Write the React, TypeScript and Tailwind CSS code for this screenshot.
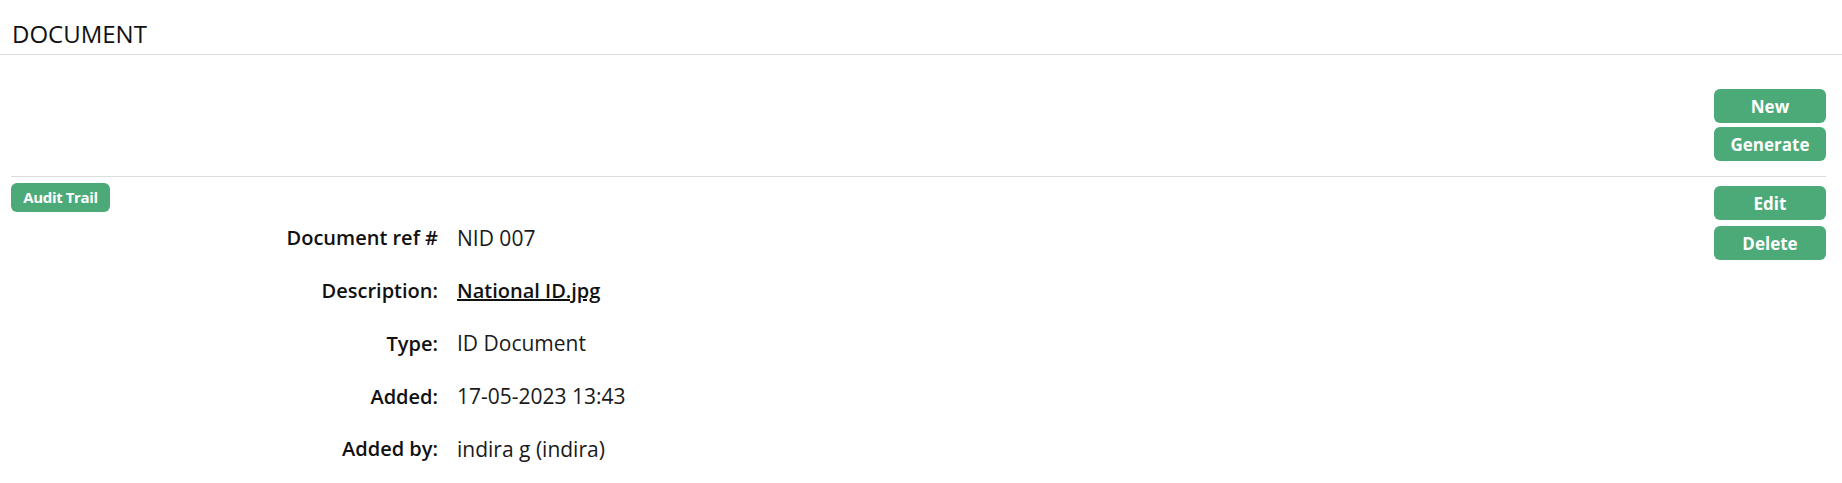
import React from "react";

const details: { label: string; value: string; link?: boolean }[] = [
  { label: "Document ref #", value: "NID 007" },
  { label: "Description:", value: "National ID.jpg", link: true },
  { label: "Type:", value: "ID Document" },
  { label: "Added:", value: "17-05-2023 13:43" },
  { label: "Added by:", value: "indira g (indira)" },
];

function GreenButton({ children }: { children: React.ReactNode }) {
  return (
    <button className="w-[112px] h-[34px] rounded-[6px] bg-[#4caa79] text-white text-[17px] font-bold leading-none">
      {children}
    </button>
  );
}

export default function App() {
  return (
    <div className="min-h-[483px] bg-white text-[#111] font-['Open_Sans',sans-serif]">
      {/* page title */}
      <div className="h-[55px] px-3 pt-[19px] border-b border-[#dddddd]">
        <h1 className="text-[24px] leading-[30px] font-normal">DOCUMENT</h1>
      </div>

      <div className="pl-[11px] pr-4">
        {/* toolbar */}
        <div className="flex flex-col items-end gap-1 pt-[34px] pb-[15px] border-b border-[#dddddd]">
          <GreenButton>New</GreenButton>
          <GreenButton>Generate</GreenButton>
        </div>

        <div className="flex">
          <div className="flex-1">
            <button className="mt-[6px] h-[29px] w-[99px] rounded-[6px] bg-[#4caa79] text-white text-[15px] font-bold tracking-tight leading-none">
              Audit Trail
            </button>
            <div className="grid grid-cols-[427px_1fr] gap-x-[19px]">
              {details.map((d) => (
                <React.Fragment key={d.label}>
                  <div className="h-[52.75px] flex items-center justify-end text-[20px] font-semibold">
                    {d.label}
                  </div>
                  <div className="h-[52.75px] flex items-center text-[21px] text-[#1a1a1a]">
                    {d.link ? (
                      <a href="#" className="underline font-semibold text-[20px] text-[#111]">
                        {d.value}
                      </a>
                    ) : (
                      d.value
                    )}
                  </div>
                </React.Fragment>
              ))}
            </div>
          </div>
          <div className="flex flex-col gap-[6px] pt-[9px]">
            <GreenButton>Edit</GreenButton>
            <GreenButton>Delete</GreenButton>
          </div>
        </div>
      </div>
    </div>
  );
}
